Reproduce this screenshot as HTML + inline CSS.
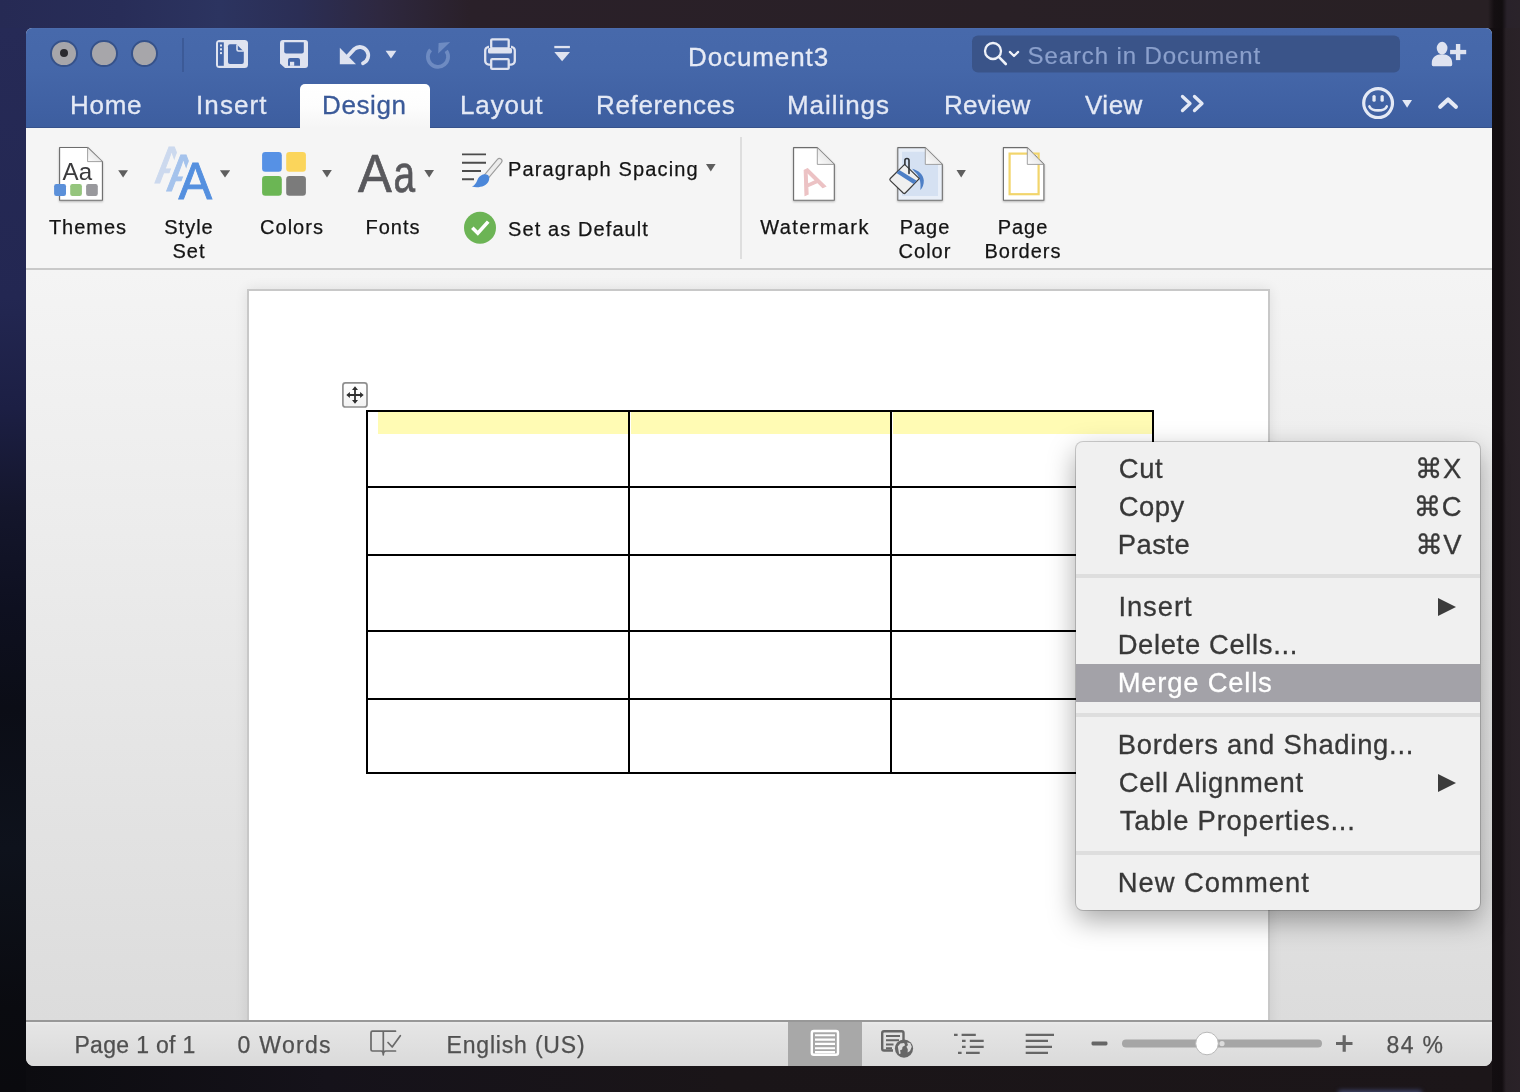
<!DOCTYPE html>
<html lang="en">
<head>
<meta charset="utf-8">
<title>Document3</title>
<style>
*{box-sizing:border-box;margin:0;padding:0}
html,body{width:1520px;height:1092px;overflow:hidden}
body{position:relative;font-family:"Liberation Sans","DejaVu Sans",sans-serif;background:#1a1418}
#bgT{position:absolute;left:0;top:0;width:1520px;height:30px;background:linear-gradient(90deg,#262a54 0,#282d58 120px,#2c3460 220px,#2b2e55 300px,#2e2840 380px,#2a2029 470px,#292026 1000px,#282024 1488px,#140f12 1494px,#120e10 1502px,#29222a 1507px,#2a232a 1520px)}
#bgL{position:absolute;left:0;top:28px;width:28px;height:1064px;background:linear-gradient(180deg,#262a56 0,#232752 270px,#1c1f44 380px,#14162c 480px,#0e1020 580px,#0b0d16 680px,#0e121c 820px,#0a0b10 980px,#0a0a0e 1064px)}
#bgR{position:absolute;left:1490px;top:28px;width:30px;height:1064px;background:linear-gradient(90deg,#130e11 0,#120d10 12px,#282126 16px,#2a2228 30px)}
#bgB{position:absolute;left:26px;top:1060px;width:1466px;height:32px;background:linear-gradient(90deg,#0c0c10 0,#15121a 300px,#1a1518 700px,#1c1619 1466px)}
.abs{position:absolute}
#win,#menu{will-change:transform}
#win{position:absolute;left:26px;top:28px;width:1466px;height:1038px;border-radius:6px 6px 8px 8px;overflow:hidden;background:#e6e6e6}
#title{position:absolute;left:0;top:0;width:1466px;height:100px;background:linear-gradient(180deg,#4c6dad 0,#4769ab 1.5px,#4567a9 40px,#3f60a2 85px,#3d5e9f 98.5px,#36528c 99px,#36528c 100px)}
.tl{position:absolute;top:11.8px;width:27.4px;height:27.4px;border-radius:50%;background:#a7a6aa;border:2px solid #36528a}
.tab{position:absolute;top:62px;-webkit-text-stroke:.3px;font-size:26px;line-height:30px;color:#e4e9f5;white-space:nowrap;letter-spacing:.2px}
#ribbon{position:absolute;left:0;top:100px;width:1466px;height:142px;background:#f5f5f5;border-bottom:2px solid #c9c9c9}
.rl{position:absolute;font-size:20px;color:#141414;-webkit-text-stroke:.25px;white-space:nowrap;text-align:center;line-height:24px;letter-spacing:1px}
#docarea{position:absolute;left:0;top:242px;width:1466px;height:752px;background:linear-gradient(180deg,#f4f4f4 0,#ececec 35%,#e2e2e2 75%,#dcdcdc 100%)}
#page{position:absolute;left:221px;top:261px;width:1023px;height:740px;background:#fff;border:2px solid #c8c8c8;box-shadow:0 0 12px rgba(0,0,0,.09)}
#status{position:absolute;left:0;top:992px;width:1466px;height:46px;background:linear-gradient(180deg,#ebebeb 0,#e5e5e5 3px,#dadada 100%);border-top:2px solid #989898}
.st{position:absolute;top:9.5px;font-size:23px;line-height:26px;color:#505050;-webkit-text-stroke:.25px;white-space:nowrap}
#menu{position:absolute;left:1076px;top:442px;width:404px;height:468px;background:#f0f0f0;border-radius:7px;box-shadow:0 0 0 1px rgba(0,0,0,.18),0 10px 28px rgba(0,0,0,.35);overflow:hidden}
.mi{position:absolute;left:0;width:404px;height:38px;line-height:38px;font-size:27.4px;color:#383838;-webkit-text-stroke:.3px;padding-left:43px;white-space:nowrap;letter-spacing:.7px}
.mi .sc{position:absolute;right:18px;top:0}
.mi.hl{background:#a3a2a8;color:#fff}
.sep{position:absolute;left:0;width:404px;height:4px;background:#dedede}
#tbl .ln{position:absolute;background:#000}
#tbl .hl{position:absolute;background:#fffbb4}
.mi .ar{position:absolute;right:24px;top:10px;width:0;height:0;border-left:18px solid #3c3c3c;border-top:9.5px solid transparent;border-bottom:9.5px solid transparent}
</style>
</head>
<body>
<div id="bgT"></div><div id="bgL"></div><div id="bgR"></div><div id="bgB"></div><div class="abs" style="left:1338px;top:1089.5px;width:84px;height:8px;border-radius:3px;background:#3b4166;filter:blur(2px)"></div>
<div id="win">
 <div id="title">
  <div class="tl" style="left:24.2px"><div class="abs" style="left:7.7px;top:7.7px;width:8px;height:8px;border-radius:50%;background:#2b2a2e"></div></div>
  <div class="tl" style="left:64.4px"></div>
  <div class="tl" style="left:104.5px"></div>
  <div class="abs" style="left:156px;top:10px;width:2px;height:34px;background:#3c5a97"></div>
  <svg class="abs" style="left:0;top:0" width="1466" height="100" viewBox="26 28 1466 100">
   <g fill="#dfe3f0">
    <!-- sidebar/doc icon -->
    <rect x="216" y="40" width="32" height="28" rx="3.5"/>
    <rect x="218" y="42.3" width="5.8" height="23.5" fill="#4466a8"/>
    <rect x="220" y="44.5" width="2" height="2"/><rect x="220" y="48.3" width="2" height="2"/><rect x="220" y="52.1" width="2" height="2"/>
    <path d="M230,44.2 H236.5 L243.8,51.5 V62 a2,2 0 0 1 -2,2 H230 a2,2 0 0 1 -2,-2 V46.2 a2,2 0 0 1 2,-2z" fill="#4466a8"/>
    <path d="M237,44.5 V49.5 a1.5,1.5 0 0 0 1.5,1.5 H243.8" fill="none" stroke="#dfe3f0" stroke-width="1.6"/>
    <!-- save -->
    <path d="M283,40 H305 a3,3 0 0 1 3,3 V65 a3,3 0 0 1 -3,3 H285 L280,63.5 V43 a3,3 0 0 1 3,-3z"/>
    <path d="M284.2,42.2 H303.8 V51.5 a2,2 0 0 1 -2,2 H286.2 a2,2 0 0 1 -2,-2z" fill="#4466a8"/>
    <path d="M288,65.8 V60 a2,2 0 0 1 2,-2 H298 a2,2 0 0 1 2,2 V65.8z" fill="#4466a8"/>
    <rect x="290" y="61.8" width="4.2" height="4"/>
    <!-- undo -->
    <path d="M339.8,47.8 V64.3 H356z"/>
    <path d="M347,57 L354.2,49.2 A8.4,8.4 0 1 1 363,63.2" fill="none" stroke="#dfe3f0" stroke-width="3.8" stroke-linecap="round"/>
    <path d="M385.6,50.8 H396.4 L391,58.6z"/>
    <!-- print -->
    <rect x="491.2" y="39.3" width="17.5" height="9" fill="none" stroke="#dfe3f0" stroke-width="2.3" rx="1"/>
    <path d="M489,47 H488 a3.8,3.8 0 0 0 -2.8,3.8 V61 a3.6,3.6 0 0 0 3.6,3.6 H491" fill="none" stroke="#dfe3f0" stroke-width="2.3"/>
    <path d="M511,47 H512 a3.8,3.8 0 0 1 2.8,3.8 V61 a3.6,3.6 0 0 1 -3.6,3.6 H509" fill="none" stroke="#dfe3f0" stroke-width="2.3"/>
    <rect x="488" y="48" width="24" height="5.6" rx="1.5"/>
    <rect x="491.2" y="59.2" width="17.5" height="9.7" fill="none" stroke="#dfe3f0" stroke-width="2.3" rx="1"/>
    <!-- customize -->
    <rect x="554.3" y="45.9" width="15.6" height="2.3"/>
    <path d="M554.3,52.1 H570 L562.1,61.2z"/>
   </g>
   <!-- redo (disabled) -->
   <g fill="#6e8bc2">
    <path d="M430.6,49.9 A10.1,10.1 0 1 0 446.2,50.9" fill="none" stroke="#6e8bc2" stroke-width="3.8" stroke-linecap="butt"/>
    <path d="M438.6,43 L450.2,42.1 L438.2,53.6z"/>
   </g>
   <!-- search box -->
   <rect x="972" y="35.5" width="428" height="37" rx="6" fill="#3a5489"/>
   <circle cx="993" cy="51" r="8" fill="none" stroke="#eef1f8" stroke-width="2.3"/>
   <path d="M998.800,56.900 L1005.800,64" stroke="#eef1f8" stroke-width="2.6" stroke-linecap="round"/>
   <path d="M1009.800,51.900 L1014,56 L1018.200,51.900" fill="none" stroke="#eef1f8" stroke-width="2.2" stroke-linecap="round" stroke-linejoin="round"/>
   <!-- share -->
   <g fill="#dfe3f0">
    <ellipse cx="1442.1" cy="48.1" rx="5.4" ry="6.3"/>
    <path d="M1431.800,64.800 V63 C1431.800,57.500 1436,54.300 1442,54.300 C1448,54.300 1452.200,57.500 1452.200,63 V64.800 a1.400,1.400 0 0 1 -1.400,1.400 H1433.200 a1.400,1.400 0 0 1 -1.400,-1.400z"/>
    <rect x="1450.1" y="49.900" width="16.100" height="4.300"/><rect x="1455.900" y="44" width="4.400" height="16.100"/>
   </g>
   <!-- >> -->
   <path d="M1182.5,96.5 L1190,103.5 L1182.5,110.5 M1194.5,96.5 L1202,103.5 L1194.5,110.5" fill="none" stroke="#e4e9f5" stroke-width="3.3" stroke-linecap="round" stroke-linejoin="round"/>
   <!-- smiley -->
   <circle cx="1378.1" cy="103.1" r="14.4" fill="none" stroke="#e4e9f5" stroke-width="3.2"/>
   <rect x="1372.4" y="94.900" width="3.300" height="6.900" rx="1.600" fill="#e4e9f5"/><rect x="1380.500" y="94.900" width="3.300" height="6.900" rx="1.600" fill="#e4e9f5"/>
   <path d="M1369.400,106.400 A9,5.400 0 0 0 1386.800,106.400" fill="none" stroke="#e4e9f5" stroke-width="2.600" stroke-linecap="round"/>
   <path d="M1402.200,100 H1412 L1407.100,107.700z" fill="#e4e9f5"/>
   <path d="M1440.200,106.800 L1448.050,99.400 L1455.900,106.800" fill="none" stroke="#e4e9f5" stroke-width="4.100" stroke-linecap="round" stroke-linejoin="round"/>
  </svg>
  <div class="abs" id="doctitle" style="left:662px;top:14px;font-size:26px;color:#e6eaf5;letter-spacing:.9px;-webkit-text-stroke:.3px;white-space:nowrap;line-height:30px">Document3</div>
  <div class="abs" id="search" style="left:1001.5px;top:13px;font-size:24px;color:#8ba0cc;letter-spacing:.9px;-webkit-text-stroke:.2px;white-space:nowrap;line-height:30px">Search in Document</div>
  <div class="abs" style="left:274px;top:56px;width:130px;height:44px;border-radius:5px 5px 0 0;background:linear-gradient(180deg,#fff 0%,#fdfdfd 50%,#f5f5f5 100%)"></div>
  <div class="tab" style="left:44px;letter-spacing:.7px">Home</div>
  <div class="tab" style="left:170px;letter-spacing:1.1px">Insert</div>
  <div class="tab" style="left:296px;letter-spacing:.6px;color:#3b5a99">Design</div>
  <div class="tab" style="left:434px;letter-spacing:.9px">Layout</div>
  <div class="tab" style="left:570px;letter-spacing:.65px">References</div>
  <div class="tab" style="left:761px;letter-spacing:.95px">Mailings</div>
  <div class="tab" style="left:918px;letter-spacing:.2px">Review</div>
  <div class="tab" style="left:1059px;letter-spacing:.5px">View</div>
 </div>
 <div id="ribbon">
  <svg class="abs" style="left:0;top:0" width="1466" height="140" viewBox="26 128 1466 140">
   <defs>
    <linearGradient id="fold" x1="0" y1="1" x2="1" y2="0"><stop offset="0" stop-color="#fdfdfd"/><stop offset=".5" stop-color="#e9e9e9"/><stop offset="1" stop-color="#d6d6d6"/></linearGradient>
    <filter id="ds" x="-20%" y="-20%" width="140%" height="150%"><feGaussianBlur in="SourceAlpha" stdDeviation="1.2"/><feOffset dy="1.2"/><feComponentTransfer><feFuncA type="linear" slope=".28"/></feComponentTransfer><feMerge><feMergeNode/><feMergeNode in="SourceGraphic"/></feMerge></filter>
   </defs>
   <!-- Themes -->
   <g filter="url(#ds)">
    <path d="M59.6,147.5 H87.6 L102.4,161.6 V200.3 H59.6z" fill="#fff" stroke="#6d6d6d" stroke-width="1.1" stroke-linejoin="round"/>
    <path d="M87.6,147.5 V161.6 H102.4z" fill="url(#fold)" stroke="#8a8a8a" stroke-width=".8" stroke-linejoin="round"/>
   </g>
   <text x="62.6" y="179.7" font-family="Liberation Sans, sans-serif" font-size="24.5" fill="#3b3b3d" textLength="29.5" lengthAdjust="spacingAndGlyphs">Aa</text>
   <rect x="54.1" y="184.1" width="11.9" height="11.8" rx="2.2" fill="#5b90d9"/>
   <rect x="70.2" y="184.1" width="11.7" height="11.8" rx="2.2" fill="#95c57d"/>
   <rect x="86.1" y="184.1" width="11.7" height="11.8" rx="2.2" fill="#99999d"/>
   <g fill="#5e5e5e">
    <path d="M118.2,170.2 H128 L123.1,177.5z"/>
    <path d="M219.9,170.2 H230.2 L225,177.5z"/>
    <path d="M322.1,170 H331.8 L327,177.5z"/>
    <path d="M424.3,170 H434 L429.2,177.5z"/>
    <path d="M706,164.1 H715.6 L710.8,171.6z"/>
    <path d="M956.5,170.1 H965.9 L961.2,177.5z"/>
   </g>
   <!-- Style Set -->
   <clipPath id="ca1"><path d="M140,140 H181.500 L160.500,197.400 H140z"/></clipPath>
   <clipPath id="ca2"><path d="M150,140 H196.500 L174,201.400 H150z"/></clipPath>
   <g font-family="Liberation Sans, sans-serif" font-size="52.5" stroke-width=".9">
    <g clip-path="url(#ca1)"><text x="154.7" y="183.1" fill="#ccd9ee" stroke="#ccd9ee" textLength="33.6" lengthAdjust="spacingAndGlyphs">A</text></g>
    <g clip-path="url(#ca2)"><text x="166.6" y="191.1" fill="#a5c3ec" stroke="#a5c3ec" textLength="33.6" lengthAdjust="spacingAndGlyphs">A</text></g>
    <text x="178.5" y="199.1" fill="#5590df" stroke="#5590df" textLength="33.6" lengthAdjust="spacingAndGlyphs">A</text>
   </g>
   <!-- Colors -->
   <rect x="262.1" y="152.1" width="19.7" height="19.6" rx="3.2" fill="#5691e5"/>
   <rect x="286.2" y="152.1" width="19.7" height="19.6" rx="3.2" fill="#fbd55b"/>
   <rect x="262.1" y="176.1" width="19.7" height="19.7" rx="3.2" fill="#6bb654"/>
   <rect x="286.2" y="176.1" width="19.7" height="19.7" rx="3.2" fill="#7b7b7b"/>
   <!-- Fonts -->
   <text y="191.7" font-family="Liberation Sans, sans-serif" font-size="53.6" fill="#58585c" stroke="#58585c" stroke-width=".7"><tspan x="358" textLength="33.8" lengthAdjust="spacingAndGlyphs">A</tspan><tspan x="393.4" textLength="21.6" lengthAdjust="spacingAndGlyphs">a</tspan></text>
   <!-- Paragraph spacing -->
   <g stroke="#4c4c4c" stroke-width="1.9">
    <path d="M462,154.4 H486 M462,162.7 H486 M462,171 H481 M462,179.3 H474"/>
   </g>
   <path d="M499.4,161 L486,177" stroke="#9c9c9c" stroke-width="6.2" stroke-linecap="round"/>
   <path d="M499.4,161 L486,177" stroke="#ececec" stroke-width="4" stroke-linecap="round"/>
   <path d="M488.2,175.2 C490.5,178 489,183.5 484,185.8 C480,187.6 475.5,187.6 471.8,186.6 C476,184.8 476.5,181.5 478.2,178.2 C480,174.8 485,172.8 488.2,175.2z" fill="#4b87d9"/>
   <!-- Set as default -->
   <circle cx="480" cy="227.7" r="16" fill="#6cb455"/>
   <path d="M472.3,227.8 L477.8,233.2 L488.2,221.6" fill="none" stroke="#fff" stroke-width="3.6" stroke-linejoin="miter"/>
   <!-- separator -->
   <rect x="740" y="137" width="2" height="122" fill="#dedede"/>
   <!-- Watermark -->
   <g filter="url(#ds)">
    <path d="M793.6,147.6 H817.3 L834.3,164.4 V200.2 H793.6z" fill="#fff" stroke="#6d6d6d" stroke-width="1.1" stroke-linejoin="round"/>
    <path d="M817.3,147.6 V164.4 H834.3z" fill="url(#fold)" stroke="#8a8a8a" stroke-width=".8" stroke-linejoin="round"/>
   </g>
   <text transform="translate(805,195.5) rotate(-24)" font-family="Liberation Sans, sans-serif" font-size="34" fill="#ecc2c4" stroke="#ecc2c4" stroke-width="1.1">A</text>
   <!-- Page Color -->
   <g filter="url(#ds)">
    <path d="M897.8,147.6 H925.3 L942.3,164.4 V200.2 H897.8z" fill="#e9eff8" stroke="#6d6d6d" stroke-width="1.1" stroke-linejoin="round"/>
   </g>
   <path d="M902,151.8 H925.3 V164.4 H938 V196 H902z" fill="#d5e1f2"/>
   <path d="M925.3,147.6 V164.4 H942.3z" fill="url(#fold)" stroke="#8a8a8a" stroke-width=".8" stroke-linejoin="round"/>
   <path d="M912.2,168.800 C918.500,170.500 923.400,174.500 923.800,180.500 C924,184.500 922.500,187.800 920.300,190 C920.800,186 920.600,182.500 919.600,179.200 C918.600,176 916.800,173.200 914.200,171.200z" fill="#4d7fc6"/>
   <path d="M904.600,164.400 L919.300,178.600 L905.300,193 Q904.300,194 903.200,193 L890.300,180.600 Q889.300,179.600 890.300,178.500z" fill="#efefef" stroke="#3d3d3d" stroke-width="1.2" stroke-linejoin="round"/>
   <path d="M899.300,169.900 L896.500,172.900 L913.600,183.900 L916.700,180.800z" fill="#4d7fc6"/>
   <path d="M904.900,164.600 V160.500 a2.050,2.050 0 0 1 4.100,0 V173.400" fill="none" stroke="#2f3338" stroke-width="1.6" stroke-linecap="round"/>
   <!-- Page Borders -->
   <g filter="url(#ds)">
    <path d="M1003.4,147.6 H1027.3 L1043.9,164.4 V200.2 H1003.4z" fill="#fff" stroke="#6d6d6d" stroke-width="1.1" stroke-linejoin="round"/>
   </g>
   <rect x="1009.6" y="153.6" width="29" height="40.6" fill="none" stroke="#f2d56c" stroke-width="2.2"/>
   <path d="M1027.3,148 V164.4 H1043.4z" fill="#fff"/>
   <path d="M1027.3,147.6 V164.4 H1043.9z" fill="url(#fold)" stroke="#8a8a8a" stroke-width=".8" stroke-linejoin="round"/>
  </svg>
  <div class="rl" style="left:12px;width:100px;top:87px">Themes</div>
  <div class="rl" style="left:113px;width:100px;top:87px">Style<br>Set</div>
  <div class="rl" style="left:216px;width:100px;top:87px">Colors</div>
  <div class="rl" style="left:317px;width:100px;top:87px">Fonts</div>
  <div class="rl" style="left:482px;top:29px;text-align:left;letter-spacing:1.15px">Paragraph Spacing</div>
  <div class="rl" style="left:482px;top:89px;text-align:left;letter-spacing:1.1px">Set as Default</div>
  <div class="rl" style="left:729px;width:120px;top:87px;letter-spacing:1.4px">Watermark</div>
  <div class="rl" style="left:849px;width:100px;top:87px">Page<br>Color</div>
  <div class="rl" style="left:937px;width:120px;top:87px">Page<br>Borders</div>
 </div>
 <div id="docarea"></div>
 <div id="page">
  <!-- table: coordinates relative to page (page origin = 247,289 abs incl. border) -->
  <div id="tbl" class="abs" style="left:-249px;top:-291px;width:0;height:0">
   <div class="hl" style="left:378px;top:412px;width:250px;height:22px"></div>
   <div class="hl" style="left:631px;top:412px;width:259px;height:22px"></div>
   <div class="hl" style="left:893px;top:412px;width:259px;height:22px"></div>
   <div class="ln" style="left:366px;top:410px;width:788px;height:2px"></div>
   <div class="ln" style="left:366px;top:486px;width:788px;height:2px"></div>
   <div class="ln" style="left:366px;top:554px;width:788px;height:2px"></div>
   <div class="ln" style="left:366px;top:630px;width:788px;height:2px"></div>
   <div class="ln" style="left:366px;top:698px;width:788px;height:2px"></div>
   <div class="ln" style="left:366px;top:772px;width:788px;height:2px"></div>
   <div class="ln" style="left:366px;top:410px;width:2px;height:364px"></div>
   <div class="ln" style="left:628px;top:410px;width:2px;height:364px"></div>
   <div class="ln" style="left:890px;top:410px;width:2px;height:364px"></div>
   <div class="ln" style="left:1152px;top:410px;width:2px;height:364px"></div>
   <svg class="abs" style="left:341px;top:381px" width="28" height="28" viewBox="341 381 28 28">
    <defs><linearGradient id="hg" x1="0" y1="0" x2="0" y2="1"><stop offset="0" stop-color="#ffffff"/><stop offset="1" stop-color="#f2f2f2"/></linearGradient></defs>
    <rect x="342.9" y="382.9" width="24.1" height="24.1" rx="2.6" fill="url(#hg)" stroke="#8f8f8f" stroke-width="1.7"/>
    <path d="M355,389 V401 M349,395 H361" stroke="#2e2e2e" stroke-width="1.8" fill="none"/>
    <path d="M355,386.300 L358,389.900 H352z M355,403.700 L358,400.100 H352z M346.300,395 L349.900,392 V398z M363.700,395 L360.100,392 V398z" fill="#2e2e2e"/>
   </svg>
  </div>
 </div>
 <div id="status">
  <div class="st" style="left:48.4px;letter-spacing:.33px">Page 1 of 1</div>
  <div class="st" style="left:211.6px;letter-spacing:1.28px">0 Words</div>
  <div class="st" style="left:420.5px;letter-spacing:.82px">English (US)</div>
  <div class="st" style="left:1360.5px;letter-spacing:1.34px">84 %</div>
  <div class="abs" style="left:762px;top:0;width:74px;height:44px;background:#a8a8a8"></div>
  <svg class="abs" style="left:0;top:0" width="1466" height="44" viewBox="26 1022 1466 44">
   <!-- proofing book -->
   <g fill="none" stroke="#696969" stroke-width="1.7" stroke-linejoin="round" stroke-linecap="round">
    <path d="M383.3,1031.200 H372.500 a1.500,1.500 0 0 0 -1.500,1.500 V1049.500 a1.500,1.500 0 0 0 1.500,1.500 H381 C382.500,1051 383.300,1052.500 383.300,1054.800 V1031.200 H395.500 M383.300,1054.800 C383.300,1052.500 384.500,1051 386,1051 H395.500"/>
    <path d="M388,1042.500 L392.200,1047 L400.300,1035.700"/>
   </g>
   <!-- print layout (selected) -->
   <rect x="811.8" y="1031" width="26.2" height="23.8" rx="2" fill="none" stroke="#fff" stroke-width="2.4"/>
   <path d="M815,1035.300 H835 M815,1039.600 H835 M815,1043.900 H835 M815,1048.200 H835 M815,1052.100 H835" stroke="#fff" stroke-width="2.1"/>
   <!-- web layout -->
   <g stroke="#666" fill="none">
    <path d="M903.500,1040 V1033 a1.800,1.800 0 0 0 -1.800,-1.800 H884 a1.800,1.800 0 0 0 -1.800,1.800 V1048.700 a1.800,1.800 0 0 0 1.800,1.800 H893" stroke-width="2.400"/>
    <path d="M886,1036 H900 M886,1040.200 H899 M886,1044.400 H893.500 M886,1048.300 H892" stroke-width="2"/>
   </g>
   <circle cx="904" cy="1048.600" r="9.100" fill="#666"/>
   <path d="M897.800,1046.500 l2.500,-3 l3.800,-0.600 l1,2.400 l-2.600,1.600 l-0.400,2.600 l-2,0.800 l0.600,3.200 l-1.600,0.600z M907,1042.400 l3.200,0.600 l1.600,3.800 l-1.800,4.200 l-2.400,1.600 l0.200,-3.400 l-1.400,-2.400 l1.600,-1.800z" fill="#dcdcdc"/>
   <!-- outline -->
   <g stroke="#666" stroke-width="2.300">
    <path d="M954,1034.800 H957.600 M961.600,1034.800 H975.800 M962,1040.900 H965.600 M969.800,1040.900 H983.700 M962,1046.900 H965.600 M969.800,1046.900 H983.700 M958,1052.900 H961.600 M966,1052.900 H979.700"/>
   </g>
   <!-- draft -->
   <g stroke="#666" stroke-width="2.300">
    <path d="M1025.700,1034.800 H1054 M1025.700,1040.900 H1048 M1025.700,1046.900 H1052 M1025.700,1052.900 H1048"/>
   </g>
   <!-- zoom slider -->
   <rect x="1091.5" y="1041.500" width="16" height="4" rx="1.4" fill="#666"/>
   <rect x="1122" y="1039.500" width="200" height="8" rx="4" fill="#a6a6a6"/>
   <circle cx="1222" cy="1043.700" r="2.600" fill="#dcdcdc"/>
   <circle cx="1207" cy="1043.500" r="11.300" fill="#fff" stroke="#b9b9b9" stroke-width="1"/>
   <path d="M1336,1043.500 H1352.500 M1344.200,1035.300 V1051.700" stroke="#666" stroke-width="3.200"/>
  </svg>
 </div>
</div>
<div id="menu">
 <div class="mi" style="top:8px;padding-left:42.7px;letter-spacing:0.69px">Cut<span class="sc">&#8984;X</span></div>
 <div class="mi" style="top:46px;padding-left:42.7px;letter-spacing:0.52px">Copy<span class="sc">&#8984;C</span></div>
 <div class="mi" style="top:84px;padding-left:41.7px;letter-spacing:0.47px">Paste<span class="sc">&#8984;V</span></div>
 <div class="sep" style="top:132px"></div>
 <div class="mi" style="top:146px;padding-left:42.4px;letter-spacing:0.94px">Insert<span class="ar"></span></div>
 <div class="mi" style="top:184px;padding-left:41.7px;letter-spacing:0.65px">Delete Cells...</div>
 <div class="mi hl" style="top:222px;padding-left:41.7px;letter-spacing:0.79px">Merge Cells</div>
 <div class="sep" style="top:271px"></div>
 <div class="mi" style="top:284px;padding-left:41.7px;letter-spacing:0.74px">Borders and Shading...</div>
 <div class="mi" style="top:322px;padding-left:42.7px;letter-spacing:0.71px">Cell Alignment<span class="ar"></span></div>
 <div class="mi" style="top:360px;padding-left:43.7px;letter-spacing:0.8px">Table Properties...</div>
 <div class="sep" style="top:409px"></div>
 <div class="mi" style="top:422px;padding-left:41.7px;letter-spacing:1.0px">New Comment</div>
</div>
</body>
</html>
